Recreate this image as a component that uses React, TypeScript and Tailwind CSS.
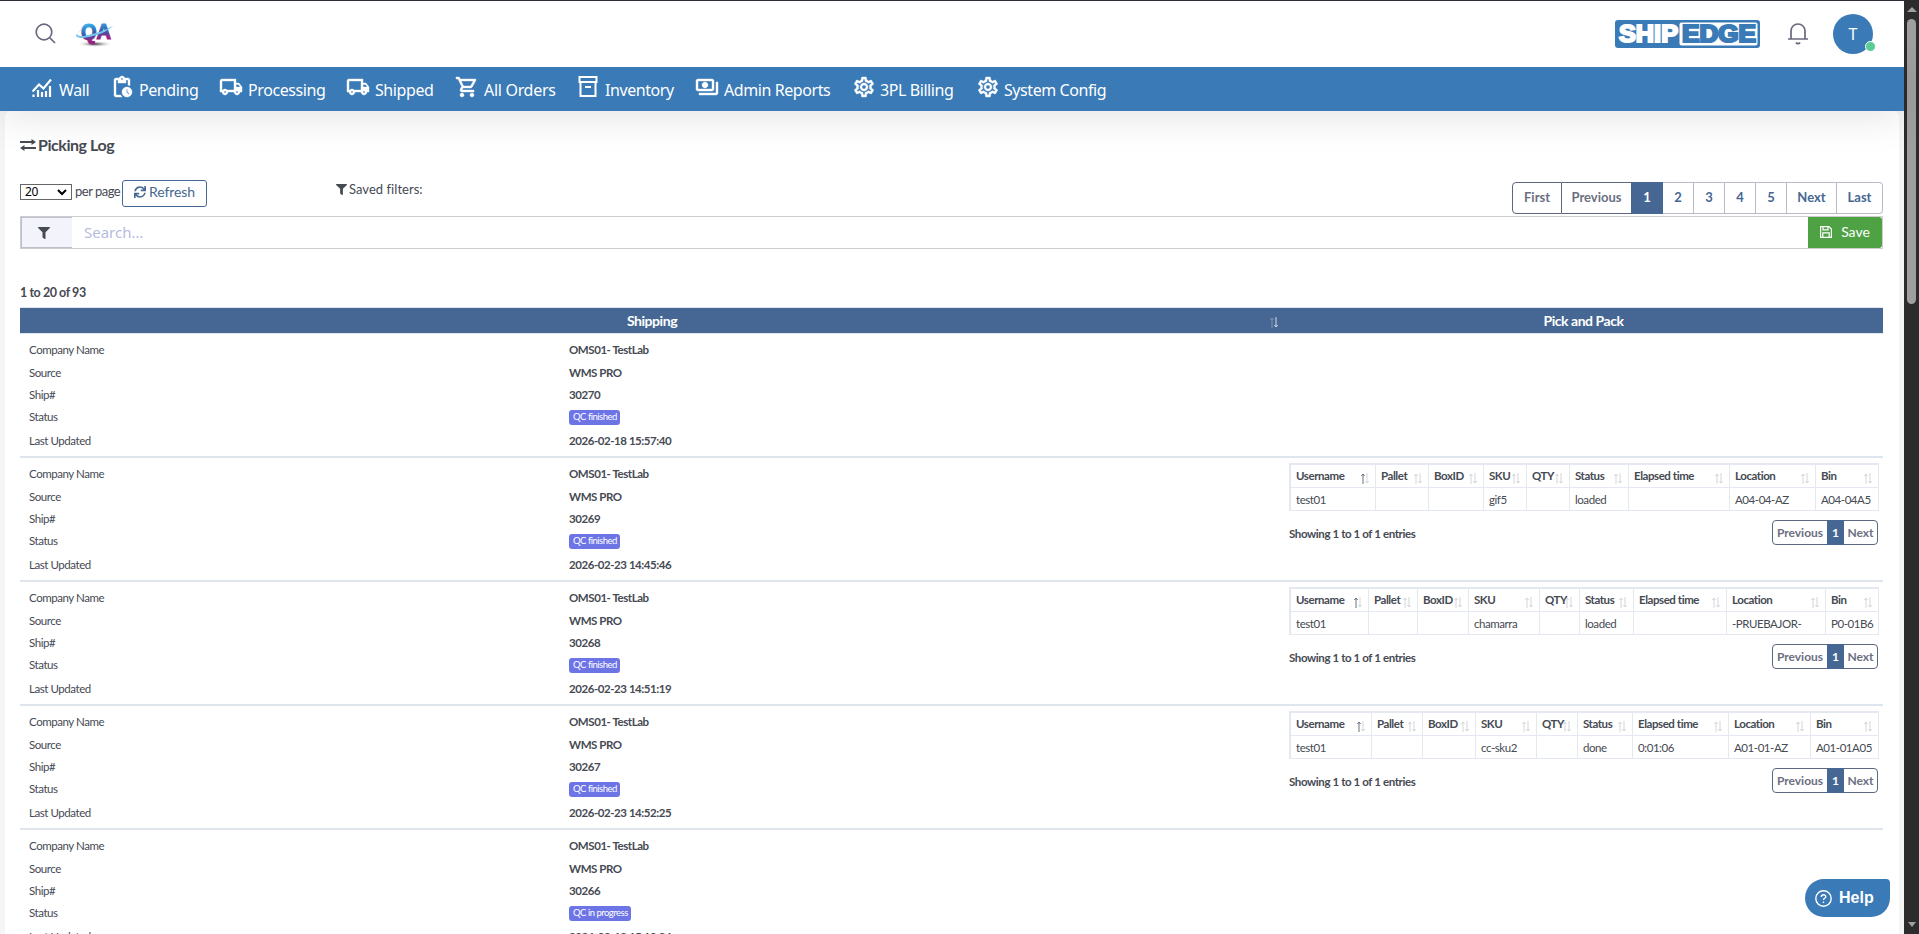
import type { ReactNode } from "react";
import {
  MdOutlinePendingActions,
  MdOutlineLocalShipping,
  MdOutlineShoppingCart,
  MdOutlinePayments,
  MdOutlineSettings,
} from "react-icons/md";
import { FaFilter } from "react-icons/fa";

interface NavItem {
  label: string;
  icon: ReactNode;
  width: string;
}

interface PickLog {
  widths: number[];
  cells: string[];
}

interface ShipmentRow {
  ship: string;
  status: string;
  updated: string;
  log?: PickLog;
}

const WallIcon = () => (
  <svg className="mr-[3px] mt-[3px] h-5 w-5" viewBox="0 0 20 20" fill="none" stroke="currentColor" strokeWidth="2.200">
    <path d="m.5 13.500 6.500-7 4.500 4L19 1.500" />
    <path d="M1.500 19v-2.500M6 19v-7M10 19v-5M14 19v-6M18 19V8" />
  </svg>
);

const ArchiveIcon = () => (
  <svg className="mr-[2px] mt-[1px] h-[21px] w-[21px]" viewBox="0 0 21 21" fill="none" stroke="currentColor" strokeWidth="2">
    <path d="M1.500 1h17v5h-17zM2.500 6v14h15V6M7 11h6" />
  </svg>
);

const navItems: NavItem[] = [
  { label: "Wall", icon: <WallIcon />, width: "w-[78px]" },
  { label: "Pending", icon: <MdOutlinePendingActions className="mr-[1px] h-6 w-6 stroke-[0.4]" />, width: "w-[109px]" },
  { label: "Processing", icon: <MdOutlineLocalShipping className="mr-[1px] h-6 w-6 stroke-[0.4]" />, width: "w-[127px]" },
  { label: "Shipped", icon: <MdOutlineLocalShipping className="mr-[1px] h-6 w-6 stroke-[0.4]" />, width: "w-[109px]" },
  {
    label: "All Orders",
    icon: <MdOutlineShoppingCart className="mr-[1px] h-6 w-6 stroke-[0.4]" />,
    width: "w-[123px] tracking-[-0.3px]",
  },
  { label: "Inventory", icon: <ArchiveIcon />, width: "w-[117px]" },
  { label: "Admin Reports", icon: <MdOutlinePayments className="mr-[1px] h-6 w-6 stroke-[0.4]" />, width: "w-[157px]" },
  { label: "3PL Billing", icon: <MdOutlineSettings className="h-6 w-6 stroke-[0.4]" />, width: "w-[124px]" },
  { label: "System Config", icon: <MdOutlineSettings className="h-6 w-6 stroke-[0.4]" />, width: "w-[140px]" },
];

const logColumns = ["Username", "Pallet", "BoxID", "SKU", "QTY", "Status", "Elapsed time", "Location", "Bin"];

const rows: ShipmentRow[] = [
  { ship: "30270", status: "QC finished", updated: "2026-02-18 15:57:40" },
  {
    ship: "30269",
    status: "QC finished",
    updated: "2026-02-23 14:45:46",
    log: {
      widths: [86, 53, 55, 43, 43, 59, 101, 86, 63],
      cells: ["test01", "", "", "gif5", "", "loaded", "", "A04-04-AZ", "A04-04A5"],
    },
  },
  {
    ship: "30268",
    status: "QC finished",
    updated: "2026-02-23 14:51:19",
    log: {
      widths: [79, 49, 51, 71, 40, 54, 93, 99, 53],
      cells: ["test01", "", "", "chamarra", "", "loaded", "", "-PRUEBAJOR-", "P0-01B6"],
    },
  },
  {
    ship: "30267",
    status: "QC finished",
    updated: "2026-02-23 14:52:25",
    log: {
      widths: [82, 51, 53, 61, 41, 55, 96, 82, 68],
      cells: ["test01", "", "", "cc-sku2", "", "done", "0:01:06", "A01-01-AZ", "A01-01A05"],
    },
  },
  { ship: "30266", status: "QC in progress", updated: "2026-02-18 15:19:24" },
];

function QaLogo() {
  return (
    <svg className="ml-[19px] h-[30px] w-[40px]" viewBox="0 0 40 30">
      <defs>
        <linearGradient id="qa" x1="0" y1="0" x2="0.25" y2="1">
          <stop offset="0.2" stopColor="#3db8f0" />
          <stop offset="0.6" stopColor="#2d5fb0" />
          <stop offset="0.9" stopColor="#9a2280" />
        </linearGradient>
        <radialGradient id="qaShadow">
          <stop offset="0" stopColor="#333" />
          <stop offset="1" stopColor="#fff" stopOpacity="0" />
        </radialGradient>
      </defs>
      <ellipse cx="20" cy="25" rx="18" ry="3.200" fill="url(#qaShadow)" />
      <text
        x="6"
        y="20"
        fontFamily="Liberation Sans"
        fontWeight="700"
        fontSize="22"
        textLength="30"
        lengthAdjust="spacingAndGlyphs"
        fill="url(#qa)"
        stroke="url(#qa)"
        strokeWidth="1.200"
      >
        QA
      </text>
      <path
        d="M7 10.500C-1 14.500 1 18.500 11 16.500S30 11.500 38.500 6.500C31 14 20 17 11 18.500S-4 17.500 7 10.500z"
        fill="#74c4ec"
      />
    </svg>
  );
}

function ShipedgeLogo() {
  return (
    <svg className="h-[28px] w-[145px]" viewBox="0 0 145 28">
      <rect width="145" height="28" rx="3" fill="#3a7ab6" />
      <rect x="64.500" y="2.500" width="78" height="23" rx="2" fill="#fff" />
      <g fontFamily="Liberation Sans" fontWeight="700" fontSize="23">
        <text x="4" y="22.300" textLength="59" lengthAdjust="spacingAndGlyphs" fill="#fff" stroke="#fff" strokeWidth="2">SHIP</text>
        <text x="67" y="22.300" textLength="74" lengthAdjust="spacingAndGlyphs" fill="#3a7ab6" stroke="#3a7ab6" strokeWidth="2.200">EDGE</text>
      </g>
    </svg>
  );
}

function SortArrows({ up = "#d4d5d9", down = "#d4d5d9" }: { up?: string; down?: string }) {
  return (
    <svg className="h-[11px] w-[8px] shrink-0" viewBox="0 0 8 11" fill="none">
      <path d="M2 11V1M.3 3 2 1l1.700 2" stroke={up} />
      <path d="M6 0v10M4.300 8 6 10l1.700-2" stroke={down} />
    </svg>
  );
}

function Header() {
  return (
    <header className="relative z-10 flex h-[67px] items-center border-t border-[#2b2b33] bg-white pb-px pl-[35px] pr-[31px]">
      <svg className="h-[21px] w-[21px]" viewBox="0 0 21 21" fill="none" stroke="#6b6880" strokeWidth="1.700">
        <circle cx="9" cy="9" r="7.800" />
        <path d="m14.500 14.500 5.500 5.500" />
      </svg>
      <QaLogo />
      <div className="ml-auto flex items-center">
        <ShipedgeLogo />
        <svg className="ml-[27px] h-[22px] w-[22px]" viewBox="0 0 22 22" fill="none" stroke="#6b6880" strokeWidth="1.700">
          <path d="M1 16h20M4 16V8c0-4 3-7 7-7s7 3 7 7v8" />
          <path d="M9 19.500c.8 1.500 3.200 1.500 4 0" />
        </svg>
        <div className="relative ml-[24px] flex h-10 w-10 items-center justify-center rounded-full bg-[#3a7ab6] font-['Noto_Sans',sans-serif] text-base text-white">
          T
          <span className="absolute -right-[3px] bottom-[2px] h-[11px] w-[11px] rounded-full border border-white bg-[#5dcb94]" />
        </div>
      </div>
    </header>
  );
}

function NavBar() {
  return (
    <nav className="relative flex h-[44px] shrink-0 items-start bg-[#3a7ab6] pl-[32px] font-['Noto_Sans','Liberation_Sans',sans-serif] text-[16px] tracking-[-0.42px] text-white shadow-[0_4px_40px_rgba(0,0,0,0.12)] [&_path[fill=none]]:stroke-none">
      {navItems.map((item) => (
        <a key={item.label} className={`${item.width} flex shrink-0 items-start whitespace-nowrap pt-[8px]`}>
          {item.icon}
          <span className="pl-[4px] pt-[3px] leading-6">{item.label}</span>
        </a>
      ))}
    </nav>
  );
}

function Toolbar() {
  return (
    <div className="flex h-[36px] shrink-0 items-start justify-between">
      <div className="flex w-[316px] items-start text-[13px]">
        <div className="mt-[4px] flex h-4 w-[52px] items-center justify-between border border-[#666] px-1 font-['Noto_Sans',sans-serif] text-[12px] tracking-[-0.4px] text-black">
          20
          <svg className="h-2 w-[10px]" viewBox="0 0 10 8" fill="none" stroke="#000" strokeWidth="2">
            <path d="m1 2 4 4 4-4" />
          </svg>
        </div>
        <span className="w-[50px] whitespace-nowrap pl-[3px] pt-[2px] tracking-[-0.5px]">per page</span>
        <button className="flex h-[27px] w-[85px] items-center justify-center gap-[3px] rounded-[3px] border border-[#466793] pb-[4px] text-[14px] text-[#466793]">
          <svg className="h-3 w-3" viewBox="0 0 512 512" fill="currentColor">
            <path d="M440.650 12.570l4 82.770A247.160 247.160 0 0 0 255.830 8C134.730 8 33.910 94.920 12.290 209.820A12 12 0 0 0 24.090 224h49.050a12 12 0 0 0 11.670-9.260 175.910 175.910 0 0 1 317-56.940l-101.460-4.860a12 12 0 0 0-12.570 12v47.410a12 12 0 0 0 12 12H500a12 12 0 0 0 12-12V12a12 12 0 0 0-12-12h-47.370a12 12 0 0 0-11.980 12.570zM255.830 432a175.610 175.610 0 0 1-146-77.800l101.800 4.870a12 12 0 0 0 12.570-12v-47.400a12 12 0 0 0-12-12H12a12 12 0 0 0-12 12V500a12 12 0 0 0 12 12h47.350a12 12 0 0 0 12-12.600l-4.150-82.570A247.170 247.170 0 0 0 255.830 504c121.110 0 221.930-86.920 243.550-201.820a12 12 0 0 0-11.800-14.180h-49.050a12 12 0 0 0-11.670 9.260A175.860 175.860 0 0 1 255.830 432z" />
          </svg>
          <span className="tracking-[-0.1px]">Refresh</span>
        </button>
      </div>
      <div className="flex flex-1 items-center gap-[2px] text-[13px]">
        <FaFilter className="h-[11px] w-[11px]" />
        <span className="tracking-[0.04px]">Saved filters:</span>
      </div>
      <div className="mt-[2px] flex h-[32px] text-[13px] font-bold text-[#466793]">
        <span className="flex w-[50px] items-center justify-center rounded-l-[4px] border border-[#5d6780] text-[#6b6f82]">First</span>
        <span className="flex w-[69px] items-center justify-center border-y border-[#5d6780] text-[#6b6f82]">Previous</span>
        <span className="flex w-[32px] items-center justify-center bg-[#466793] text-white">1</span>
        {["2", "3", "4", "5"].map((page) => (
          <span key={page} className="flex w-[31px] items-center justify-center border-y border-r border-[#b9bbcb]">
            {page}
          </span>
        ))}
        <span className="flex w-[50px] items-center justify-center border-y border-r border-[#b9bbcb]">Next</span>
        <span className="flex w-[46px] items-center justify-center rounded-r-[4px] border-y border-r border-[#b9bbcb]">Last</span>
      </div>
    </div>
  );
}

function SearchBar() {
  return (
    <div className="flex h-[33px] shrink-0 border border-[#cdcdcd] bg-white">
      <span className="flex w-[51px] items-center border border-r-0 border-[#bcbfcc] bg-[#f3f4fb] pl-[16px]">
        <FaFilter className="h-[12px] w-[12px]" />
      </span>
      <span className="flex-1 pl-[12px] font-['Noto_Sans',sans-serif] text-[15px] leading-[30px] text-[#b5bcdf]">Search…</span>
      <button className="flex w-[74px] items-center justify-center gap-[9px] rounded-r-[3px] bg-[#4fa244] pb-[2px] text-[14px] text-white">
        <svg className="h-[12px] w-[12px]" viewBox="0 0 12 12" fill="none" stroke="currentColor" strokeWidth="1.200">
          <path d="M.6.600h8.400l2.400 2.400v8.400H.6z" />
          <path d="M3 .6v3.200h5V.6M2.800 11.400V6.800h6.400v4.600" />
        </svg>
        Save
      </button>
    </div>
  );
}

function PickTable({ log }: { log: PickLog }) {
  return (
    <div className="w-[595px] pl-[5px] pt-[5px]">
      <div className="border-l-2 border-t-2 border-[#e3e8f1]">
        {[logColumns, log.cells].map((line, lineIndex) => (
          <div key={lineIndex} className={lineIndex === 0 ? "flex h-[23px] font-bold" : "flex h-[23px]"}>
            {line.map((text, i) => (
              <div
                key={i}
                className="flex shrink-0 items-center justify-between whitespace-nowrap border-b border-r border-[#e3e8f1] pl-[5px] pr-[6px]"
                style={{ width: i === 0 ? log.widths[i] - 1 : log.widths[i] }}
              >
                <span className={lineIndex === 0 ? "w-0" : "w-0 pt-[2px]"}>{text}</span>
                {lineIndex === 0 && (
                  <span className="pt-[5px]">
                    <SortArrows up={i === 0 ? "#6b6f82" : undefined} />
                  </span>
                )}
              </div>
            ))}
          </div>
        ))}
      </div>
      <div className="flex items-start justify-between pr-[1px] pt-[9px] font-bold">
        <span className="pt-[5px] tracking-[-0.4px]">Showing 1 to 1 of 1 entries</span>
        <div className="flex h-[25px] rounded-[4px] border border-[#5d6780] text-[12px] tracking-normal text-[#6b6f82]">
          <span className="flex w-[54px] items-center justify-center">Previous</span>
          <span className="-my-px flex w-[17px] items-center justify-center bg-[#466793] text-white">1</span>
          <span className="flex w-[33px] items-center justify-center">Next</span>
        </div>
      </div>
    </div>
  );
}

function Shipment({ row }: { row: ShipmentRow }) {
  const fields: [string, ReactNode, string][] = [
    ["Company Name", "OMS01- TestLab", "h-[24px]"],
    ["Source", "WMS PRO", "h-[22px]"],
    ["Ship#", row.ship, "h-[21px]"],
    [
      "Status",
      <span className="flex h-[15px] items-center rounded-[3px] bg-[#6c74e6] pl-[4px] pr-[3.500px] text-[9.500px] font-normal tracking-[-0.5px] text-white">
        {row.status}
      </span>,
      "h-[24px]",
    ],
    ["Last Updated", row.updated, "h-[24px]"],
  ];
  return (
    <div className="flex h-[124px] shrink-0 border-b-2 border-[#dfe5ed] text-[11.500px] tracking-[-0.44px]">
      <div className="w-[1264px] pl-[9px] pt-[4px]">
        {fields.map(([label, value, height]) => (
          <div key={label} className={`${height} flex items-center`}>
            <span className="w-[540px]">{label}</span>
            <span className="font-bold">{value}</span>
          </div>
        ))}
      </div>
      {row.log && <PickTable log={row.log} />}
    </div>
  );
}

function ScrollBar() {
  return (
    <div className="flex w-[15px] shrink-0 flex-col items-center bg-[#2c2c2c]">
      <span className="mt-[7px] border-x-[5px] border-b-[5px] border-x-transparent border-b-[#9f9f9f]" />
      <span className="mt-[7px] h-[285px] w-[9px] rounded-full bg-[#9f9f9f]" />
      <span className="mb-[7px] mt-auto border-x-[4px] border-t-[5px] border-x-transparent border-t-[#9f9f9f]" />
    </div>
  );
}

export default function App() {
  return (
    <div className="flex h-[934px] w-[1919px] overflow-hidden bg-[#f5f5f5] font-['Lato','Liberation_Sans',sans-serif] text-[#464a53]">
      <div className="flex min-w-0 flex-1 flex-col">
        <Header />
        <NavBar />
        <main className="mx-[5px] flex min-h-0 flex-1 flex-col overflow-hidden rounded-t-[6px] bg-white pl-[15px] pr-[16px]">
          <h1 className="flex h-[69px] shrink-0 items-center gap-[2px] pb-[2px] text-[16px] font-bold tracking-[-0.45px]">
            <svg className="h-3 w-4" viewBox="0 0 16 12" fill="none" stroke="currentColor" strokeWidth="2">
              <path d="M0 3h14M2 9h14" />
              <path d="m11.500 0 4.500 3-4.500 3zM4.500 6 0 9l4.500 3z" fill="currentColor" stroke="none" />
            </svg>
            Picking Log
          </h1>
          <Toolbar />
          <SearchBar />
          <p className="flex h-[58px] shrink-0 items-end pb-[4px] text-[12.500px] font-bold tracking-[-0.44px]">1 to 20 of 93</p>
          <div className="flex h-[27px] shrink-0 items-center border-y border-[#dfe5ed] bg-[#466793] text-[14px] font-bold tracking-[-0.45px] text-white">
            <div className="flex w-[1264px] items-center pl-[14px] pr-[6px]">
              <span className="flex-1 text-center">Shipping</span>
              <span className="pt-[4px]">
                <SortArrows up="#8095b3" down="#d5dce6" />
              </span>
            </div>
            <span className="flex-1 text-center">Pick and Pack</span>
          </div>
          {rows.map((row) => (
            <Shipment key={row.ship} row={row} />
          ))}
        </main>
      </div>
      <ScrollBar />
      <button className="fixed bottom-[17px] right-[29px] flex h-[38px] w-[85px] items-center gap-[7px] rounded-[20px] rounded-tr-[4px] bg-[#3a7ab6] pl-[10px] font-['Liberation_Sans',sans-serif] text-[16px] font-bold text-white">
        <svg className="h-[17px] w-[17px]" viewBox="0 0 17 17" fill="none" stroke="currentColor" strokeWidth="1.400">
          <circle cx="8.500" cy="8.500" r="7.700" />
          <path d="M6.300 7c0-3 4.500-3 4.500-.3 0 1.600-2.300 1.600-2.300 3.300M8.500 11.500v1.500" />
        </svg>
        Help
      </button>
    </div>
  );
}
